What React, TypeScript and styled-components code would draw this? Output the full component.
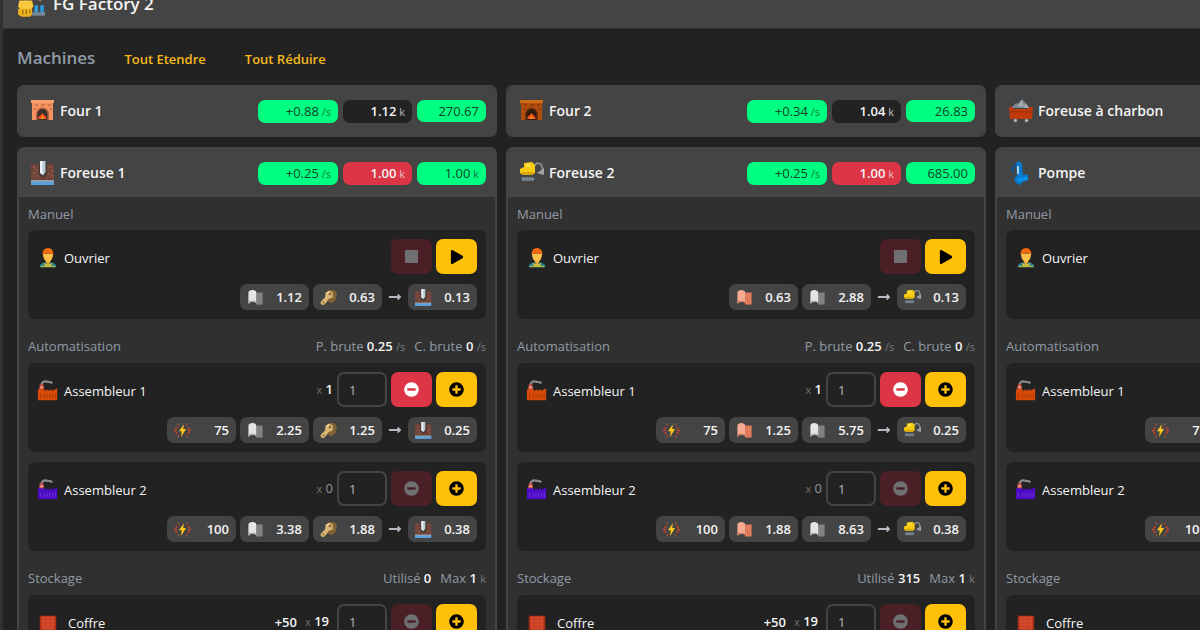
import React from "react";
import styled, { createGlobalStyle, css } from "styled-components";
import { FaLongArrowAltRight, FaMinusCircle, FaPlay, FaPlusCircle, FaStop } from "react-icons/fa";

const c = {
  page: "#222222",
  panel: "#303030",
  raised: "#444444",
  muted: "#909ba6",
  faint: "#8e9398",
  text: "#f4f4f4",
  green: "#00ff80",
  red: "#dc3545",
  yellow: "#ffc107",
};

const GlobalStyle = createGlobalStyle`
  *, *::before, *::after { box-sizing: border-box; }
  body {
    margin: 0;
    background: ${c.page};
    color: ${c.text};
    font-family: "Open Sans", "Noto Sans", sans-serif;
    font-size: 13px;
    font-weight: 600;
    line-height: 20px;
  }
  button, input { font: inherit; }
  h1, h2, h3, h4, p { margin: 0; font: inherit; }
  svg { display: block; flex: none; }
`;

/* ---------- pictures ---------- */

type IconName =
  | "factory" | "furnace1" | "furnace2" | "coal" | "drill1" | "drill2" | "pump"
  | "worker" | "assembler1" | "assembler2" | "energy" | "iron" | "copper" | "gear" | "chest";

const furnace = (body: string, top: string, arch: string, mouth: string) => (
  <>
    <path d="M0 1h23v3H0z" fill={top} />
    <path d="M1 4h21v17h-5v-6a5 5 0 0 0-10 0v6H1z" fill={body} />
    <path d="M4 6h3M10 6h4M17 6h3M3 10h2M19 10h2" stroke={arch} strokeWidth="1" />
    <path d="M5 21v-6a6.500 6.500 0 0 1 13 0v6h-2v-6a4.500 4.500 0 0 0-9 0v6z" fill={arch} />
    <path d="M6.500 21v-6a5 5 0 0 1 10 0v6z" fill={mouth} />
    <path d="M7.500 20c-.5-3 2-3 4-6 2 3 4.500 3 4 6z" fill="#f4511e" />
    <path d="M10.500 20c0-2 .5-2 1-3.500.5 1.500 1 1.500 1 3.500z" fill="#ffb300" />
  </>
);

const plant = (body: string, line: string) => (
  <>
    <path d="M5 4.500c1-3 4-3.500 7-2.500 2 .8 3 0 4 1" stroke="#85898d" strokeWidth="2.400" fill="none" strokeLinecap="round" />
    <path d="M3 5h4l.5 6H2.500z" fill="#d9483a" />
    <path d="M3 7h4v2H3z" fill="#e5a094" />
    <path d="M1 10h7.500v2l4-2v2l4-2v2l5.500-3V22H1z" fill={body} />
    <path d="M4 15v5M8 15v5M11 15v5M14 15v5M17 15v5M20 14v6" stroke={line} strokeWidth="1" />
  </>
);

const sheet = (roll: string, inner: string, back: string) => (
  <>
    <path d="M13 5h9v17h-9z" fill={back} />
    <path d="M16 5h1v17h-1zM19 5h1v17h-1z" fill="#000" opacity=".1" />
    <path d="M2 5c0-5 11-5 11 0v15c-3-3-8-3-11 1z" fill={roll} />
    <path d="M3 20c1-3 7-3 9-1v-2c-3-1-6-1-9 0z" fill={inner} />
  </>
);

const pictures: Record<IconName, React.ReactNode> = {
  factory: (
    <>
      <circle cx="8" cy="5" r="4" fill="#f0b48c" />
      <path d="M2 9h11l1 5-2 3H3l-2-3z" fill="#f8c93c" />
      <path d="M1 16h12v5l-2 2H4l-3-2z" fill="#f0b41c" />
      <path d="M5 17v4M8 17v4M11 17v3" stroke="#8c6412" />
      <path d="M16 4l6 4-2 2-5-4z" fill="#a57065" />
      <path d="M15 13h3v6h-3zM20 13h3v6h-3z" fill="#2f9cdc" />
      <path d="M13 19h11v3H13z" fill="#74889a" />
    </>
  ),
  furnace1: furnace("#f4915f", "#f9a06e", "#b0603f", "#3b302c"),
  furnace2: furnace("#b04d0a", "#cf6a16", "#77300a", "#331b10"),
  coal: (
    <>
      <path d="M2 9l5-5 2 1 4-5 8 9z" fill="#7c858c" />
      <path d="M8 7l5-6 2 7zM16 4l4 5h-5z" fill="#a4abb0" />
      <path d="M0 8h3l2 2h13l2-2h4l-1 12H1z" fill="#c03a0c" />
      <path d="M1 12h22v1.500H1z" fill="#a83009" />
      <circle cx="6.500" cy="21.500" r="2" fill="#7d8387" />
      <circle cx="17.500" cy="21.500" r="2" fill="#7d8387" />
      <circle cx="6.500" cy="21.500" r="1" fill="#d0d4d6" />
      <circle cx="17.500" cy="21.500" r="1" fill="#d0d4d6" />
    </>
  ),
  drill1: (
    <>
      <path d="M0 3h8v10l4 3 4-3V3h7v16H0z" fill="#704438" />
      <path d="M2 5h2v2H2zM5 8h2v2H5zM2 11h2v2H2zM5 14h2v2H5zM18 5h2v2h-2zM20 9h2v2h-2zM17 12h2v2h-2zM20 14h2v2h-2z" fill="#8a5748" />
      <path d="M7.500 3h8.500v10l-4 4-4.500-4z" fill="#453833" />
      <path d="M9 0h5.500v11L12 14.500 9 12z" fill="#bccad2" />
      <path d="M9 0h2.500v13.500L9 12z" fill="#eaf0f3" />
      <path d="M0 20h23v4H0z" fill="#5aa0dc" />
      <path d="M0 19h23v2H0z" fill="#8ba1b4" />
    </>
  ),
  drill2: (
    <>
      <path d="M13 6l4-4 4 1 2 6" fill="none" stroke="#85898c" strokeWidth="2" />
      <path d="M17 12l7-5v7z" fill="#9ea3a5" />
      <path d="M0 8l4-2V2l8-1 3 3v8l-3 2H3l-3-2z" fill="#f6cb10" />
      <path d="M6 3h4v3H6z" fill="#ffe45a" />
      <path d="M1 11h13l-2 3H3z" fill="#d6a80c" />
      <path d="M2 16h11l2 2-2 2H2l-1-2z" fill="#66757f" />
      <path d="M3 18h1.500M6 18h1.500M9 18h1.500M12 18h1.500" stroke="#94a0a8" strokeWidth="1.500" />
    </>
  ),
  pump: (
    <>
      <path d="M7 2c1-2 5-2 6 1l1 11 5-1v6l-5 2-3 3-4-2-2-4 3-4z" fill="#0878cc" />
      <path d="M7 3L3 8l1 4" fill="none" stroke="#08599b" strokeWidth="2" />
      <path d="M8 5h2v8H8z" fill="#9fd0ec" />
      <path d="M8 17l11-1v3l-10 2z" fill="#0a91e4" />
    </>
  ),
  worker: (
    <>
      <path d="M3 22c0-4 3-5 9-5s9 1 9 5z" fill="#1f7f9c" />
      <path d="M7 17l1.500 4h7l1.500-4-3 1.500h-4z" fill="#c6bf44" />
      <path d="M4 20.500h16v1.500H4z" fill="#b8b83c" />
      <path d="M9.500 13h5v4L12 19l-2.500-2z" fill="#eda72f" />
      <path d="M6.500 7h11c0 5-2 9-5.500 9s-5.500-4-5.500-9z" fill="#fcc049" />
      <path d="M6 8c0-4 2.500-7 6-7s6 3 6 7c-3-1.500-9-1.500-12 0z" fill="#f4680e" />
    </>
  ),
  assembler1: plant("#d84a08", "#a83808"),
  assembler2: plant("#4a0cc4", "#7434dc"),
  energy: (
    <>
      <path d="M14 3L7 13h4l-1 8 7-11h-4z" fill="#ffc61a" />
      <path d="M0 12h4M2 8l3 1M2 16l3-1M24 12h-4M22 8l-3 1M22 16l-3-1" fill="none" stroke="#d9442a" strokeWidth="2" />
      <path d="M7 5L5 2M17 5l2-3M7 19l-2 3M17 19l2 3" fill="none" stroke="#9b5139" strokeWidth="2" />
    </>
  ),
  iron: sheet("#e5e5e5", "#a7a7a7", "#878787"),
  copper: sheet("#f9ab91", "#d27a60", "#e7805f"),
  gear: (
    <>
      <path d="M11 4l4-3 6 1 3 5-2 9-6 4-6-3z" fill="#7f6235" />
      <path d="M1 18l6-6 1-7 5-3 5 3v7l-6 2-3 5-4 4-4-2z" fill="#d9b573" />
      <circle cx="14" cy="7" r="2" fill="#8c6a3a" />
      <circle cx="5" cy="19" r="1.500" fill="#9a7643" />
      <path d="M9 6l3-3 2 1-4 4z" fill="#f0d69d" />
    </>
  ),
  chest: (
    <>
      <path d="M3 4h18v16H3z" fill="#a92f17" />
      <path d="M5 5h14v14H5z" fill="#d4492b" />
      <path d="M7 8h10M7 12h10M7 16h10M9 7v10M15 7v10" stroke="#c23f25" strokeWidth="1" />
    </>
  ),
};

const Icon = ({ name, size }: { name: IconName; size: number }) => (
  <svg viewBox="0 0 24 24" width={size} height={size} aria-hidden="true">{pictures[name]}</svg>
);

/* ---------- page frame ---------- */

const Page = styled.div`
  overflow: hidden;
  border-left: 3px solid ${c.panel};
`;

const TopBar = styled.header`
  display: flex;
  align-items: center;
  gap: 8px;
  height: 50px;
  margin-top: -21px;
  padding: 0 14px;
  background: ${c.raised};
  border-bottom: 1px solid #2c3137;
`;

const Title = styled.h1`
  font-size: 17px;
  font-weight: 600;
  line-height: 24px;
`;

const Toolbar = styled.div`
  display: flex;
  align-items: center;
  gap: 29px;
  height: 56px;
  padding: 2px 14px 0;
`;

const Heading = styled.h2`
  font-size: 17px;
  font-weight: 600;
  line-height: 24px;
  color: ${c.muted};
`;

const LinkButton = styled.button`
  padding: 2px 0 0;
  margin-right: 10px;
  border: 0;
  background: none;
  color: #f5b91a;
  cursor: pointer;
`;

const Columns = styled.main`
  display: grid;
  grid-template-columns: repeat(3, minmax(480px, 1fr));
  gap: 9px;
  padding: 0 14px 14px;
`;

const Column = styled.div`
  display: flex;
  flex-direction: column;
  gap: 10px;
`;

/* ---------- machine card ---------- */

const Card = styled.article`
  border: 2px solid ${c.raised};
  border-radius: 7px;
  background: ${c.panel};
  overflow: hidden;
`;

const CardHead = styled.div`
  display: flex;
  align-items: center;
  gap: 5px;
  height: 48px;
  padding: 0 9px 0 12px;
  background: ${c.raised};
`;

const CardName = styled.h3`
  flex: 1;
  font-size: 14px;
`;

type Tone = "green" | "dark" | "red";
const tones = {
  green: css`background: ${c.green}; color: #15402a; font-weight: 400;`,
  dark: css`background: ${c.page};`,
  red: css`background: ${c.red};`,
};

const Pill = styled.span<{ $tone: Tone; $wide?: boolean }>`
  width: ${(p) => (p.$wide ? 80 : 69)}px;
  padding: 1px 7px;
  border-radius: 7px;
  text-align: right;
  white-space: nowrap;
  ${(p) => tones[p.$tone]}
`;

const Unit = styled.small`
  font-size: 11px;
  font-weight: 400;
  opacity: 0.7;
`;

const CardBody = styled.div`
  display: flex;
  flex-direction: column;
  gap: 17px;
  padding: 7px 9px 9px;
`;

const SectionHead = styled.div`
  display: flex;
  justify-content: space-between;
  margin-bottom: 6px;
  color: ${c.muted};
  font-weight: 500;
`;

const SectionTitle = styled.h4``;

const Stats = styled.p`
  display: flex;
  gap: 9px;

  b {
    color: ${c.text};
    font-weight: 600;
  }
`;

const Boxes = styled.div`
  display: flex;
  flex-direction: column;
  gap: 10px;
`;

const Box = styled.div`
  display: flex;
  flex-direction: column;
  gap: 10px;
  padding: 9px;
  border-radius: 7px;
  background: ${c.page};
`;

const Controls = styled.div`
  display: flex;
  align-items: center;
  gap: 4px;
  height: 35px;
`;

const UnitName = styled.span<{ $spaced?: boolean }>`
  display: flex;
  align-items: center;
  gap: ${(p) => (p.$spaced ? 9 : 5)}px;
  flex: 1;
  padding-top: 2px;
  font-weight: 500;
`;

const Count = styled.span<{ $active: boolean; $spaced: boolean }>`
  margin-right: ${(p) => (p.$spaced ? 4 : 0)}px;
  color: ${(p) => (p.$active ? c.text : c.faint)};
  font-weight: ${(p) => (p.$active ? 600 : 500)};
  white-space: nowrap;

  ${Unit} {
    color: ${c.faint};
  }
`;

const Bonus = styled.span`
  margin-right: 4px;
`;

const Amount = styled.input`
  width: 50px;
  height: 35px;
  padding: 0 10px;
  border: 2px solid ${c.raised};
  border-radius: 7px;
  background: ${c.page};
  color: #b4b8bc;
  font-weight: 400;
`;

const Action = styled.button<{ $kind: "danger" | "primary" }>`
  display: grid;
  place-items: center;
  width: 41px;
  height: 35px;
  padding: 0;
  border: 0;
  border-radius: 7px;
  background: ${(p) => (p.$kind === "danger" ? c.red : c.yellow)};
  color: ${(p) => (p.$kind === "danger" ? "#ffffff" : "#000000")};

  &:disabled {
    background: #4a2026;
    color: #707072;
  }
`;

const Recipe = styled.div`
  display: flex;
  justify-content: flex-end;
  align-items: center;
  gap: 4px;
`;

const Chip = styled.span`
  display: flex;
  justify-content: space-between;
  align-items: center;
  width: 69px;
  height: 26px;
  padding: 0 7px;
  border-radius: 7px;
  background: ${c.raised};
`;

const Arrow = styled.span`
  display: grid;
  place-items: center;
  width: 18px;
  color: #b3b9be;
`;

/* ---------- data ---------- */

type Item = [IconName, string];
type Step = { input: Item[]; output: Item };
type Badge = { tone: Tone; value: string; unit?: string };
type Machine = {
  name: string;
  icon: IconName;
  badges?: Badge[];
  used?: string;
  manual?: Step;
  auto?: Step[];
};

const machines: Machine[][] = [
  [
    {
      name: "Four 1", icon: "furnace1",
      badges: [{ tone: "green", value: "+0.88", unit: "/s" }, { tone: "dark", value: "1.12", unit: "k" }, { tone: "green", value: "270.67" }],
    },
    {
      name: "Foreuse 1", icon: "drill1", used: "0",
      badges: [{ tone: "green", value: "+0.25", unit: "/s" }, { tone: "red", value: "1.00", unit: "k" }, { tone: "green", value: "1.00", unit: "k" }],
      manual: { input: [["iron", "1.12"], ["gear", "0.63"]], output: ["drill1", "0.13"] },
      auto: [
        { input: [["energy", "75"], ["iron", "2.25"], ["gear", "1.25"]], output: ["drill1", "0.25"] },
        { input: [["energy", "100"], ["iron", "3.38"], ["gear", "1.88"]], output: ["drill1", "0.38"] },
      ],
    },
  ],
  [
    {
      name: "Four 2", icon: "furnace2",
      badges: [{ tone: "green", value: "+0.34", unit: "/s" }, { tone: "dark", value: "1.04", unit: "k" }, { tone: "green", value: "26.83" }],
    },
    {
      name: "Foreuse 2", icon: "drill2", used: "315",
      badges: [{ tone: "green", value: "+0.25", unit: "/s" }, { tone: "red", value: "1.00", unit: "k" }, { tone: "green", value: "685.00" }],
      manual: { input: [["copper", "0.63"], ["iron", "2.88"]], output: ["drill2", "0.13"] },
      auto: [
        { input: [["energy", "75"], ["copper", "1.25"], ["iron", "5.75"]], output: ["drill2", "0.25"] },
        { input: [["energy", "100"], ["copper", "1.88"], ["iron", "8.63"]], output: ["drill2", "0.38"] },
      ],
    },
  ],
  [
    { name: "Foreuse à charbon", icon: "coal" },
    {
      name: "Pompe", icon: "pump", used: "0",
      manual: { input: [["iron", "1.12"], ["gear", "0.63"]], output: ["pump", "0.13"] },
      auto: [
        { input: [["energy", "75"], ["iron", "2.25"], ["gear", "1.25"]], output: ["pump", "0.25"] },
        { input: [["energy", "100"], ["iron", "3.38"], ["gear", "1.88"]], output: ["pump", "0.38"] },
      ],
    },
  ],
];

/* ---------- parts ---------- */

const RecipeRow = ({ step }: { step: Step }) => (
  <Recipe>
    {step.input.map(([icon, value]) => (
      <Chip key={icon}><Icon name={icon} size={17} />{value}</Chip>
    ))}
    <Arrow><FaLongArrowAltRight size={14} /></Arrow>
    <Chip><Icon name={step.output[0]} size={17} />{step.output[1]}</Chip>
  </Recipe>
);

const Quantity = ({ label, count, bonus, removable }: { label: string; count: number; bonus?: string; removable: boolean }) => (
  <>
    {bonus && <Bonus>{bonus}</Bonus>}
    <Count $active={count > 0} $spaced={Boolean(bonus)}><Unit>x</Unit> {count}</Count>
    <Amount aria-label={`Quantité ${label}`} defaultValue="1" />
    <Action $kind="danger" disabled={!removable} aria-label={`Retirer ${label}`}><FaMinusCircle size={15} /></Action>
    <Action $kind="primary" aria-label={`Ajouter ${label}`}><FaPlusCircle size={15} /></Action>
  </>
);

const MachineCard = ({ machine }: { machine: Machine }) => (
  <Card>
    <CardHead>
      <Icon name={machine.icon} size={24} />
      <CardName>{machine.name}</CardName>
      {machine.badges?.map((b, i) => (
        <Pill key={i} $tone={b.tone} $wide={i === 0}>
          {b.value}{b.unit && <Unit> {b.unit}</Unit>}
        </Pill>
      ))}
    </CardHead>
    {machine.manual && machine.auto && (
      <CardBody>
        <section>
          <SectionHead><SectionTitle>Manuel</SectionTitle></SectionHead>
          <Box>
            <Controls>
              <UnitName><Icon name="worker" size={22} />Ouvrier</UnitName>
              <Action $kind="danger" disabled aria-label="Arrêter"><FaStop size={15} /></Action>
              <Action $kind="primary" aria-label="Démarrer"><FaPlay size={14} /></Action>
            </Controls>
            <RecipeRow step={machine.manual} />
          </Box>
        </section>
        <section>
          <SectionHead>
            <SectionTitle>Automatisation</SectionTitle>
            <Stats>
              <span>P. brute <b>0.25</b> <Unit>/s</Unit></span>
              <span>C. brute <b>0</b> <Unit>/s</Unit></span>
            </Stats>
          </SectionHead>
          <Boxes>
            {machine.auto.map((step, i) => (
              <Box key={i}>
                <Controls>
                  <UnitName><Icon name={i ? "assembler2" : "assembler1"} size={22} />Assembleur {i + 1}</UnitName>
                  <Quantity label={`Assembleur ${i + 1}`} count={i ? 0 : 1} removable={i === 0} />
                </Controls>
                <RecipeRow step={step} />
              </Box>
            ))}
          </Boxes>
        </section>
        <section>
          <SectionHead>
            <SectionTitle>Stockage</SectionTitle>
            <Stats>
              <span>Utilisé <b>{machine.used}</b></span>
              <span>Max <b>1</b> <Unit>k</Unit></span>
            </Stats>
          </SectionHead>
          <Box>
            <Controls>
              <UnitName $spaced><Icon name="chest" size={22} />Coffre</UnitName>
              <Quantity label="Coffre" bonus="+50" count={19} removable={false} />
            </Controls>
          </Box>
        </section>
      </CardBody>
    )}
  </Card>
);

export default function App() {
  return (
    <>
      <GlobalStyle />
      <Page>
        <TopBar>
          <Icon name="factory" size={28} />
          <Title>FG Factory 2</Title>
        </TopBar>
        <Toolbar>
          <Heading>Machines</Heading>
          <LinkButton>Tout Etendre</LinkButton>
          <LinkButton>Tout Réduire</LinkButton>
        </Toolbar>
        <Columns>
          {machines.map((column, i) => (
            <Column key={i}>
              {column.map((machine) => <MachineCard key={machine.name} machine={machine} />)}
            </Column>
          ))}
        </Columns>
      </Page>
    </>
  );
}
